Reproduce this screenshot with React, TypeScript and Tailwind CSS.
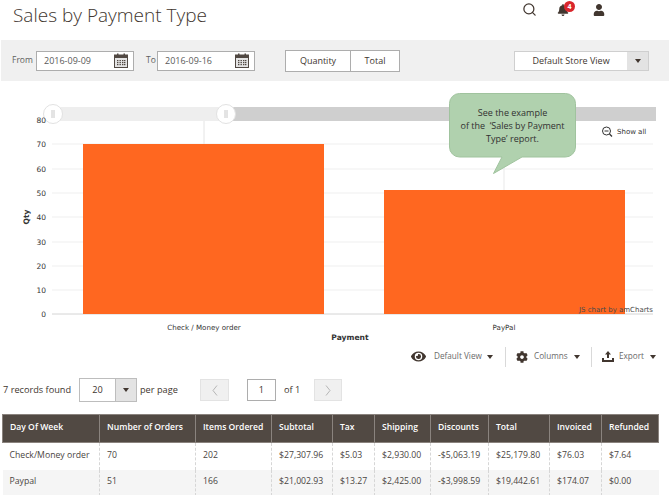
import { Search } from "lucide-react";
import { FaBell, FaCog, FaEye, FaUser } from "react-icons/fa";

const FONT = "font-['Open_Sans',sans-serif]";

const COLUMNS = [
  { title: "Day Of Week", width: 97 },
  { title: "Number of Orders", width: 96 },
  { title: "Items Ordered", width: 76 },
  { title: "Subtotal", width: 61 },
  { title: "Tax", width: 42 },
  { title: "Shipping", width: 56 },
  { title: "Discounts", width: 58 },
  { title: "Total", width: 61 },
  { title: "Invoiced", width: 52 },
  { title: "Refunded", width: 57 },
];

const ROWS = [
  ["Check/Money order", "70", "202", "$27,307.96", "$5.03", "$2,930.00", "-$5,063.19", "$25,179.80", "$76.03", "$7.64"],
  ["Paypal", "51", "166", "$21,002.93", "$13.27", "$2,425.00", "-$3,998.59", "$19,442.61", "$174.07", "$0.00"],
];

const TICKS = [
  { label: "80", y: 120 },
  { label: "70", y: 144 },
  { label: "60", y: 169 },
  { label: "50", y: 193 },
  { label: "40", y: 217 },
  { label: "30", y: 242 },
  { label: "20", y: 266 },
  { label: "10", y: 290 },
  { label: "0", y: 314 },
];

function CalendarIcon() {
  return (
    <svg width="14" height="15" viewBox="0 0 14 15" className="shrink-0">
      <rect x="0.5" y="2" width="13" height="12.5" fill="#e4e4e4" stroke="#514943" />
      <rect x="0.5" y="2" width="13" height="3" fill="#514943" />
      <rect x="3" y="0.5" width="1.5" height="3" fill="#514943" />
      <rect x="9.5" y="0.5" width="1.5" height="3" fill="#514943" />
      {[3, 5.5, 8, 10].map((x) =>
        [7, 9, 11].map((y) => <rect key={`${x}-${y}`} x={x} y={y} width="1.4" height="1.2" fill="#514943" />)
      )}
    </svg>
  );
}

function DateField({ value }: { value: string }) {
  return (
    <div className="flex h-5 w-[98px] items-center justify-between border border-[#adadad] bg-white pl-[7px] pr-[5px] text-[9px] text-[#5a5a5a]">
      <span>{value}</span>
      <CalendarIcon />
    </div>
  );
}

function Caret() {
  return <span className="block h-0 w-0 border-x-[3px] border-t-[4px] border-x-transparent border-t-[#41362f]" />;
}

function Chevron({ flip }: { flip?: boolean }) {
  return (
    <svg width="6" height="11" viewBox="0 0 6 11">
      <path d={flip ? "M1 .5 5 5.5 1 10.5" : "M5 .5 1 5.5 5 10.5"} fill="none" stroke="#b5b5b5" />
    </svg>
  );
}

function Chart() {
  return (
    <svg width="669" height="264" viewBox="0 81 669 264" className="block">
      {TICKS.slice(1).map((t) => (
        <line key={t.y} x1="52" x2="653" y1={t.y} y2={t.y} stroke={t.y === 314 ? "#d4d4d4" : "#efefef"} />
      ))}
      <line x1="204" x2="204" y1="120" y2="314" stroke="#e4e4e4" />
      <line x1="504" x2="504" y1="120" y2="314" stroke="#e9e9e9" />

      <rect x="83" y="144" width="241" height="170" fill="#ff6720" />
      <rect x="384" y="190" width="241" height="124" fill="#ff6720" />

      {/* scrollbar */}
      <rect x="53" y="107" width="603" height="14" fill="#cfcfcf" />
      <rect x="53" y="107" width="173" height="14" fill="#eeeeee" />
      {[53, 226].map((x) => (
        <g key={x}>
          <circle cx={x} cy="114" r="9.5" fill="#ffffff" stroke="#e2e2e2" />
          <line x1={x - 1} x2={x - 1} y1="110" y2="118" stroke="#c8c8c8" />
          <line x1={x + 1} x2={x + 1} y1="110" y2="118" stroke="#c8c8c8" />
        </g>
      ))}

      <g fontFamily="'DejaVu Sans', sans-serif" fontSize="7.1" fill="#333333">
        {TICKS.map((t) => (
          <text key={t.y} x="46" y={t.y + 3} textAnchor="end" fontSize="7.5">
            {t.label}
          </text>
        ))}
        <text x="204" y="330" textAnchor="middle">
          Check / Money order
        </text>
        <text x="504" y="330" textAnchor="middle">
          PayPal
        </text>
        <text x="653" y="312" textAnchor="end" fontSize="7" fill="#4b4b4b">
          JS chart by amCharts
        </text>
        <text x="617" y="134" fontSize="7">
          Show all
        </text>
        <text x="350" y="340" textAnchor="middle" fontWeight="bold" fontSize="7.6">
          Payment
        </text>
        <text x="29" y="217" textAnchor="middle" fontWeight="bold" fontSize="7.6" transform="rotate(-90 29 217)">
          Qty
        </text>
      </g>

      {/* zoom-out icon */}
      <circle cx="606.5" cy="131" r="4" fill="#ffffff" stroke="#333333" />
      <line x1="604.5" x2="608.5" y1="131" y2="131" stroke="#333333" />
      <line x1="609.5" x2="612" y1="134" y2="136.5" stroke="#333333" strokeWidth="1.3" />
    </svg>
  );
}

function Callout() {
  return (
    <div className="absolute left-[449px] top-[12px] h-[82px] w-[127px]">
      <svg width="127" height="82" viewBox="0 0 127 82" className="absolute inset-0">
        <path
          d="M10.5 .5H116.5a10 10 0 0 1 10 10V54a10 10 0 0 1-10 10H73L44.5 80.5 53 64H10.5a10 10 0 0 1-10-10V10.5a10 10 0 0 1 10-10z"
          fill="#b0d1ae"
          stroke="#a0c39e"
        />
      </svg>
      <p className="relative pt-[13px] text-center text-[9px] leading-[13px] text-[#303030]">
        See the example
        <br />
        of the &nbsp;‘Sales by Payment
        <br />
        Type’ report.
      </p>
    </div>
  );
}

export default function App() {
  return (
    <div className={`${FONT} h-[495px] w-[669px] overflow-hidden bg-white text-[#41362f]`}>
      {/* Header */}
      <header className="flex h-10 items-start justify-between">
        <h1 className="pl-[13px] text-[19px] font-light leading-[30px] text-[#41362f]">Sales by Payment Type</h1>
        <div className="flex items-center pr-[64px] pt-[2px]">
          <Search size={15} strokeWidth={2} className="mr-[20px] text-[#41362f]" />
          <div className="relative mr-[24px]">
            <FaBell size={12} className="text-[#41362f]" />
            <span className="absolute -right-[6px] -top-[3px] flex h-[11px] w-[11px] items-center justify-center rounded-full bg-[#d9262c] text-[7px] font-bold leading-none text-white">
              4
            </span>
          </div>
          <FaUser size={12} className="text-[#41362f]" />
        </div>
      </header>

      {/* Filters */}
      <section className="ml-px flex h-[41px] items-center bg-[#f0f0f0] text-[9px]">
        <span className="ml-[11px] mr-[3px] w-[21px] text-[8.5px] text-[#5f5f5f]">From</span>
        <DateField value="2016-09-09" />
        <span className="ml-3 mr-[3px] w-2 text-[8.5px] text-[#5f5f5f]">To</span>
        <DateField value="2016-09-16" />
        <div className="ml-[30px] flex h-[22px] w-[115px] border border-[#adadad] bg-white text-[#41362f]">
          <span className="flex w-[65px] items-center justify-center border-r border-[#adadad]">Quantity</span>
          <span className="flex flex-1 items-center justify-center">Total</span>
        </div>
        <div className="ml-[114px] flex h-5 w-[135px] border border-[#cfcfcf] bg-white">
          <span className="flex flex-1 items-center justify-center">Default Store View</span>
          <span className="flex w-[21px] items-center justify-center bg-[#e3e3e3]">
            <Caret />
          </span>
        </div>
      </section>

      {/* Chart */}
      <section className="relative h-[264px]">
        <Chart />
        <Callout />
      </section>

      {/* Grid actions */}
      <div className="flex h-[22px] items-center whitespace-nowrap pt-px text-[8.2px] text-[#6a6a6a]">
        <FaEye size={15} className="ml-[411px] text-[#41362f]" />
        <span className="ml-2 w-[48px]">Default View</span>
        <span className="ml-[5px]"><Caret /></span>
        <span className="ml-3 h-[20px] w-px bg-[#d9d9d9]" />
        <FaCog size={12} className="ml-[10px] text-[#41362f]" />
        <span className="ml-[6px] w-[33px]">Columns</span>
        <span className="ml-[7px]"><Caret /></span>
        <span className="ml-[11px] h-[20px] w-px bg-[#d9d9d9]" />
        <svg width="12" height="11" viewBox="0 0 12 11" className="ml-[10px]">
          <path d="M6 0 9 3.5H7V7H5V3.5H3zM0 7h2v2h8V7h2v4H0z" fill="#41362f" />
        </svg>
        <span className="ml-[5px] w-[25px]">Export</span>
        <span className="ml-[6px]"><Caret /></span>
      </div>

      {/* Pager */}
      <div className="mt-[11px] flex h-6 items-center text-[9.2px] text-[#41362f]">
        <span className="ml-[3px] w-[76px]">7 records found</span>
        <div className="flex h-6 w-[58px] border border-[#bdbdbd] bg-white">
          <span className="flex flex-1 items-center justify-center">20</span>
          <span className="flex w-[21px] items-center justify-center border-l border-[#bdbdbd] bg-[#e3e3e3]">
            <Caret />
          </span>
        </div>
        <span className="ml-[3px] w-[60px]">per page</span>
        <span className="flex h-[22px] w-[29px] items-center justify-center border border-[#e3e3e3] bg-[#f0f0f0]">
          <Chevron />
        </span>
        <span className="ml-[18px] flex h-[22px] w-[29px] items-center justify-center border border-[#adadad]">1</span>
        <span className="ml-2 w-[30px]">of 1</span>
        <span className="flex h-[22px] w-[28px] items-center justify-center border border-[#e3e3e3] bg-[#f0f0f0]">
          <Chevron flip />
        </span>
      </div>

      {/* Report table */}
      <table className="ml-[2px] mt-3 w-[656px] table-fixed border-collapse text-[8.7px]">
        <colgroup>
          {COLUMNS.map((c) => (
            <col key={c.title} style={{ width: c.width }} />
          ))}
        </colgroup>
        <thead>
          <tr className="h-[28px] bg-[#514943] text-left text-[8.6px] text-white">
            {COLUMNS.map((c) => (
              <th key={c.title} className="border border-[#8a837e] pb-[2px] pl-[7px] font-semibold">
                {c.title}
              </th>
            ))}
          </tr>
        </thead>
        <tbody>
          {ROWS.map((row, i) => (
            <tr key={row[0]} className={i % 2 ? "h-[26px] bg-[#f5f5f5]" : "h-[27px] bg-white"}>
              {row.map((cell, j) => (
                <td key={j} className="border-x border-dashed border-[#d6d6d6] pb-[2px] pl-[7px] text-[#4a4542] first:border-l-0 last:border-r-0">
                  {cell}
                </td>
              ))}
            </tr>
          ))}
        </tbody>
      </table>
    </div>
  );
}
